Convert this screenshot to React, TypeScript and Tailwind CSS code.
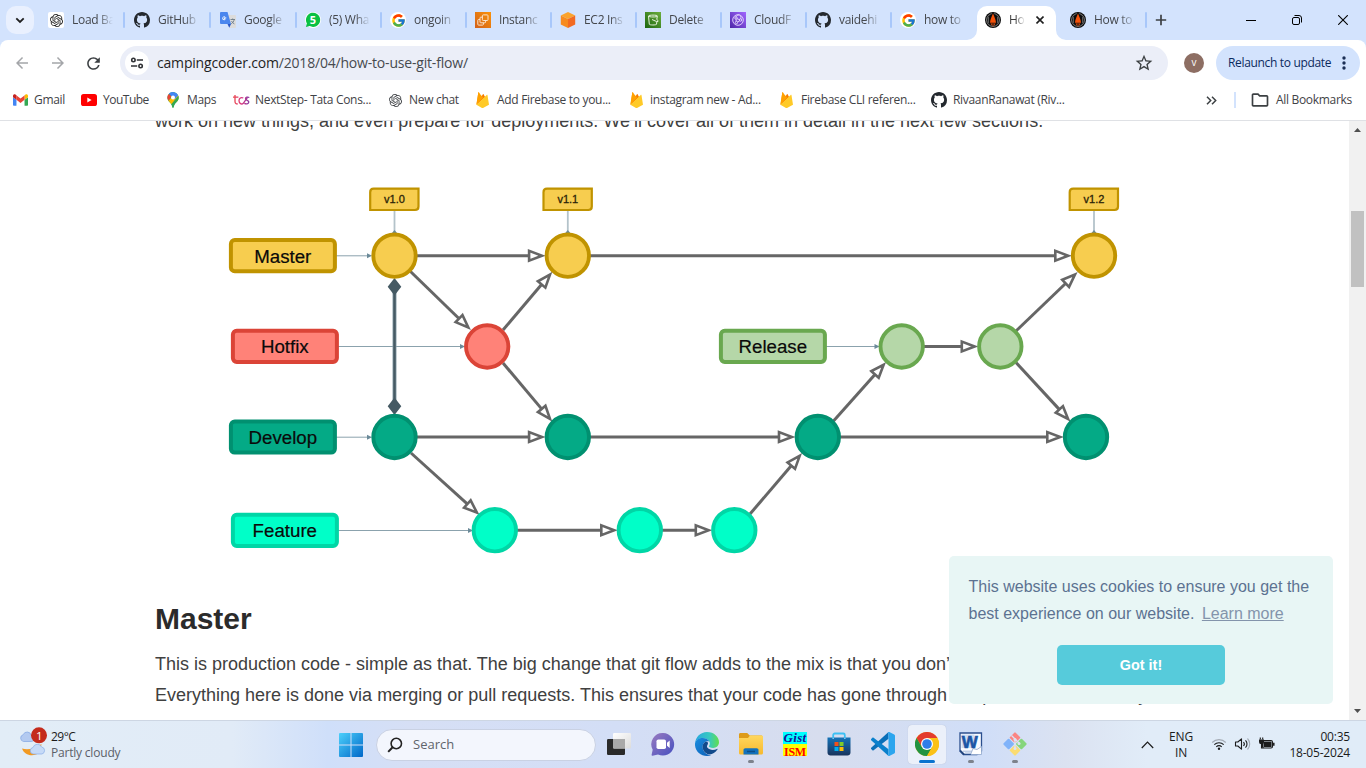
import React from "react";
import {
  MdArrowBack,
  MdArrowForward,
  MdRefresh,
  MdStarBorder,
  MdOutlineFolder,
} from "react-icons/md";
import { FcGoogle } from "react-icons/fc";
import { SiOpenai } from "react-icons/si";

/* ---------- favicons ---------- */

const OpenAiTile = () => (
  <span className="flex size-4 items-center justify-center rounded-[2px] bg-white text-[#222]">
    <SiOpenai size={13} />
  </span>
);

const GithubMark = () => (
  <svg width="16" height="16" viewBox="0 0 16 16" className="shrink-0">
    <path
      fill="#24292f"
      d="M8 0C3.58 0 0 3.58 0 8c0 3.54 2.29 6.53 5.47 7.59.4.07.55-.17.55-.38 0-.19-.01-.82-.01-1.49-2.01.37-2.53-.49-2.69-.94-.09-.23-.48-.94-.82-1.13-.28-.15-.68-.52-.01-.53.63-.01 1.08.58 1.23.82.72 1.21 1.87.87 2.33.66.07-.52.28-.87.51-1.07-1.78-.2-3.64-.89-3.64-3.95 0-.87.31-1.59.82-2.15-.08-.2-.36-1.02.08-2.12 0 0 .67-.21 2.2.82.64-.18 1.32-.27 2-.27s1.36.09 2 .27c1.53-1.04 2.2-.82 2.2-.82.44 1.1.16 1.92.08 2.12.51.56.82 1.27.82 2.15 0 3.07-1.87 3.75-3.65 3.95.29.25.54.73.54 1.48 0 1.07-.01 1.93-.01 2.2 0 .21.15.46.55.38A8.01 8.01 0 0 0 16 8c0-4.42-3.58-8-8-8z"
    />
  </svg>
);

const Translate = () => (
  <svg width="16" height="16" viewBox="0 0 16 16">
    <path d="M6 3h9.200c.5 0 .8.4.8.8v11.400c0 .4-.3.800-.8.800H9.500z" fill="#dcdcdc" />
    <path d="M1 0h6.500l3.500 12H1a1 1 0 0 1-1-1V1a1 1 0 0 1 1-1z" fill="#4a86ee" />
    <path d="M7.500 12H11l-1.700 3.800z" fill="#2a56c6" />
    <path d="M6.300 5.900H4.500v1h.8c-.2.700-.6.900-1.100.900a1.500 1.500 0 1 1 .9-2.700" fill="none" stroke="#fff" strokeWidth=".9" />
    <path d="M10.500 7.500h4.500M12.700 6.500v1M14.200 7.500c-.3 1.900-1.500 3.300-3 4.300M11.500 9c.5 1.300 1.500 2.200 2.900 2.900" stroke="#6b7b87" strokeWidth=".9" fill="none" />
  </svg>
);

const Whatsapp = () => (
  <span className="flex size-4 items-center justify-center rounded-full bg-white">
    <svg width="16" height="16" viewBox="0 0 16 16">
      <path d="M.9 15.100l1-3.700A7.100 7.100 0 1 1 4.700 14.100z" fill="#0ac143" />
      <text x="8" y="11.900" textAnchor="middle" fontFamily="Open Sans, sans-serif" fontWeight="700" fontSize="11" fill="#fff">5</text>
    </svg>
  </span>
);

const GoogleG = () => (
  <span className="flex size-4 items-center justify-center rounded-full bg-white">
    <FcGoogle size={15} />
  </span>
);

const Ec2Instances = () => (
  <svg width="16" height="16" viewBox="0 0 16 16">
    <defs>
      <linearGradient id="ec2" x1="0" y1="1" x2="1" y2="0">
        <stop offset="0" stopColor="#d1611b" />
        <stop offset="1" stopColor="#fb9208" />
      </linearGradient>
    </defs>
    <path d="M0 0h16v16H0z" fill="url(#ec2)" />
    <g stroke="#fbe3cb" strokeWidth="1">
      <rect x="2.800" y="7.500" width="5.600" height="5.600" rx=".8" fill="none" />
      <rect x="5" y="5.200" width="5.600" height="5.600" rx=".8" fill="#e27716" />
      <rect x="7.400" y="2.900" width="5.600" height="5.600" rx=".8" fill="#ea8211" />
    </g>
  </svg>
);

const OrangeCube = () => (
  <svg width="16" height="16" viewBox="0 0 16 16">
    <path d="M8 0l7.200 3.500L8 7 .8 3.500z" fill="#fba32c" />
    <path d="M.8 3.500L8 7v9L.8 12.500z" fill="#f78b1f" />
    <path d="M15.200 3.500L8 7v9l7.200-3.500z" fill="#f26a21" />
  </svg>
);

const S3Bucket = () => (
  <svg width="16" height="16" viewBox="0 0 16 16">
    <defs>
      <linearGradient id="s3" x1="0" y1="1" x2="1" y2="0">
        <stop offset="0" stopColor="#1b660f" />
        <stop offset="1" stopColor="#6cae3e" />
      </linearGradient>
    </defs>
    <path d="M0 0h16v16H0z" fill="url(#s3)" />
    <g fill="none" stroke="#e6f2df" strokeWidth="1">
      <path d="M3.500 4l.8 8.300c.1.900 7 .9 7.200 0l.3-2.500M3.500 4c0-1.200 9-1.200 9 0 0 1.300-9 1.300-9 0z" />
      <path d="M7 7.500l4.500 2h1.500c0-1-.5-1.700-1.200-2.300L12.400 4.200" />
    </g>
  </svg>
);

const CloudFront = () => (
  <svg width="16" height="16" viewBox="0 0 16 16">
    <defs>
      <linearGradient id="cf" x1="0" y1="1" x2="1" y2="0">
        <stop offset="0" stopColor="#4d27a8" />
        <stop offset="1" stopColor="#a166ff" />
      </linearGradient>
    </defs>
    <path d="M0 0h16v16H0z" fill="url(#cf)" />
    <g fill="none" stroke="#e9ddff" strokeWidth=".9">
      <circle cx="8" cy="8" r="5.300" />
      <circle cx="6" cy="6" r="1.200" />
      <circle cx="10.500" cy="8" r="1.200" />
      <circle cx="6.500" cy="10.500" r="1.200" />
      <path d="M6 4.800c1-2 2.500-2 3.500-1.800M7 6.700l2.400.9M6 7.200l.3 2.100M7.500 10l2.200-1.200M10.800 6.800c.4-1 .2-2-.3-3" />
    </g>
  </svg>
);

const Camp = () => (
  <svg width="16" height="16" viewBox="0 0 16 16" className="shrink-0">
    <circle cx="8" cy="8" r="8" fill="#0d0d0d" />
    <circle cx="8" cy="8" r="6.400" fill="none" stroke="#9a9a9a" strokeWidth=".8" />
    <path d="M8 0l4 6v6H4V6z" fill="#0d0d0d" />
    <path d="M8 1.500c.7 2 3 6 3 9.300H5c0-3.300 2.300-7.300 3-9.300z" fill="#f4520b" />
    <path d="M5.500 11.500h1.500v2zM10.500 11.500H9v2zM7.600 10.800h.8v3.700h-.8z" fill="#f4520b" />
    <path d="M3.400 5v6M12.600 5v6" stroke="#777" strokeWidth=".8" />
  </svg>
);

/* ---------- bookmark icons ---------- */

const GmailIcon = () => (
  <svg width="15" height="12" viewBox="0 0 52 40" className="shrink-0">
    <path d="M3.500 40H12V19.400L0 10.300v26.200C0 38.400 1.600 40 3.500 40" fill="#4285f4" />
    <path d="M40 40h8.500c2 0 3.500-1.600 3.500-3.500V10.300l-12 9.100" fill="#34a853" />
    <path d="M40 4v15.400l12-9.100V5.500c0-4.400-5-6.900-8.600-4.300" fill="#fbbc04" />
    <path d="M12 19.400V4l14 10.500L40 4v15.400L26 30" fill="#ea4335" />
    <path d="M0 5.500v4.800l12 9.100V4L8.600 1.200C5-1.400 0 1.100 0 5.500" fill="#c5221f" />
  </svg>
);

const YoutubeIcon = () => (
  <svg width="16" height="12" viewBox="0 0 16 12" className="shrink-0">
    <rect width="16" height="12" rx="2.600" fill="#f00" />
    <path d="M6.300 3.500v5l4.300-2.500z" fill="#fff" />
  </svg>
);

const MapsIcon = () => (
  <svg width="12" height="16" viewBox="0 0 12 16" className="shrink-0">
    <path d="M6 16c-.6 0-.7-2-1.700-3.700C3.200 10.500.4 9 .4 5.600A5.600 5.600 0 0 1 6 0a5.600 5.600 0 0 1 5.600 5.600c0 3.400-2.800 4.900-3.900 6.700C6.700 14 6.600 16 6 16z" fill="#34a853" />
    <path d="M1.900 1.900L4.500 4.200 1.600 8.800C.9 7.900.4 6.900.4 5.600.4 4.100 1 2.800 1.900 1.900z" fill="#ea4335" />
    <path d="M1.500 8.700l6.200-6.900 3.300 1.500c.9 2.200.6 4.200-.5 5.600l-4.600 3.600-1.700-.5z" fill="#fbbc04" />
    <path d="M11.300 3.800c.7 2.100.2 3.900-.8 5.200-1 1.200-2.200 2.100-2.800 3.300C6.700 14 6.600 16 6 16s-.7-2-1.700-3.700z" fill="#34a853" />
    <path d="M1.900 1.800A5.600 5.600 0 0 1 11.100 3.500L7.400 7.500 4.500 4.200z" fill="#4285f4" />
    <circle cx="6" cy="5.600" r="2" fill="#fff" />
  </svg>
);

const TcsIcon = () => (
  <svg width="17" height="12" viewBox="0 0 17 12" className="shrink-0">
    <defs>
      <linearGradient id="tcs" x1="0" y1="0" x2="17" y2="0" gradientUnits="userSpaceOnUse">
        <stop offset="0" stopColor="#ec4a4a" />
        <stop offset=".5" stopColor="#d8327c" />
        <stop offset="1" stopColor="#7a3aa8" />
      </linearGradient>
    </defs>
    <g fill="none" stroke="url(#tcs)" strokeWidth="1.300">
      <path d="M2 1v6.500c0 2 1.300 2.700 2.800 2.400M0 3.200h5.400" />
      <path d="M10.300 4C8 2.900 6 4.200 6 6.800s2.600 4.100 4.300 2.500l4.200-6" />
      <path d="M16.300 3.500c-1.600-.7-3.800-.4-3.800 1.100 0 2 3.300 1.500 3.300 3.500 0 2-2.800 2.100-4.500 1.300" />
    </g>
  </svg>
);

const FirebaseIcon = () => (
  <svg width="13" height="16" viewBox="0 0 13 16" className="shrink-0">
    <path d="M.4 12.800L2.300.5c.1-.5.600-.5.800-.1l2 3.800z" fill="#ffa000" />
    <path d="M.4 12.800L6.900 2.200c.2-.4.500-.4.700 0l1.600 3z" fill="#f57c00" />
    <path d="M.4 12.800L10.700 2.900c.3-.3.700-.1.800.3l1.500 9.500-6 3.200c-.4.200-.6.200-1 0z" fill="#ffca28" />
    <path d="M2.300.5l5 5.100L.4 12.800z" fill="#ffa000" />
  </svg>
);

/* ---------- data ---------- */

type Tab = { icon: React.ReactNode; label: string; sep?: boolean; width?: string };

const tabs: Tab[] = [
  { icon: <OpenAiTile />, label: "Load Ba", sep: true, width: "w-[86px]" },
  { icon: <GithubMark />, label: "GitHub", sep: true, width: "w-[86px]" },
  { icon: <Translate />, label: "Google", sep: true },
  { icon: <Whatsapp />, label: "(5) Wha", sep: true },
  { icon: <GoogleG />, label: "ongoin", sep: true },
  { icon: <Ec2Instances />, label: "Instanc", sep: true },
  { icon: <OrangeCube />, label: "EC2 Ins", sep: true },
  { icon: <S3Bucket />, label: "Delete", sep: true },
  { icon: <CloudFront />, label: "CloudF", sep: true },
  { icon: <GithubMark />, label: "vaidehi", sep: true },
  { icon: <GoogleG />, label: "how to" },
];

function TabCell({ icon, label, sep, width = "w-[85px]" }: Tab) {
  return (
    <div className={`flex h-full shrink-0 items-center pl-2 ${width}`}>
      <span className="flex size-4 shrink-0 items-center">{icon}</span>
      <span className="ml-2 w-[42px] text-xs tracking-[-0.3px] whitespace-nowrap text-[#44474c] [mask-image:linear-gradient(to_right,#000_62%,transparent_98%)]">
        {label}
      </span>
      {sep && <span className="ml-[9px] h-4 w-[2px] shrink-0 rounded bg-[#a8c7fa]" />}
    </div>
  );
}

function TabStrip() {
  return (
    <div className="flex h-10 items-center bg-[#d3e3fd] pl-1.5">
      <div className="flex size-7 items-center justify-center rounded-[10px] bg-[#e9f0fe]">
        <svg width="10" height="7" viewBox="0 0 10 7" fill="none" stroke="#1f1f1f" strokeWidth="1.800">
          <path d="M1.300 1.300L5 5l3.700-3.700" />
        </svg>
      </div>
      <div className="flex h-full pl-1.5">
        {tabs.map((t, i) => (
          <TabCell key={i} {...t} />
        ))}
        <div className="relative mt-1.5 flex h-[34px] w-[79px] items-center rounded-t-[10px] bg-white pb-1.5 pl-2">
          <svg className="absolute bottom-0 -left-2.5" width="10" height="10">
            <path d="M10 0v10H0A10 10 0 0 0 10 0" fill="#fff" />
          </svg>
          <svg className="absolute -right-2.5 bottom-0" width="10" height="10">
            <path d="M0 0v10h10A10 10 0 0 1 0 0" fill="#fff" />
          </svg>
          <Camp />
          <span className="ml-2 w-4 text-xs tracking-[-0.3px] whitespace-nowrap text-[#3c3c3c] [mask-image:linear-gradient(to_right,#000_40%,transparent)]">
            Ho
          </span>
          <svg className="ml-[11px]" width="8" height="8" viewBox="0 0 8 8" stroke="#1f1f1f" strokeWidth="1.600">
            <path d="M.5.5l7 7M7.500.5l-7 7" />
          </svg>
        </div>
        <div className="w-[6px]" />
        <TabCell icon={<Camp />} label="How to" sep />
      </div>
      <svg className="ml-2" width="12" height="12" viewBox="0 0 12 12" stroke="#3c4043" strokeWidth="1.700">
        <path d="M6 .8v10.400M.8 6h10.400" />
      </svg>
      <div className="ml-auto flex items-center gap-9 pr-[18px] text-black">
        <svg width="10" height="10" stroke="#000">
          <path d="M0 5.500h10" />
        </svg>
        <svg width="10" height="10" viewBox="0 0 10 10" fill="none" stroke="#000">
          <rect x=".5" y="2.500" width="7" height="7" rx="1.500" />
          <path d="M2.500.5H7A2.500 2.500 0 0 1 9.500 3v4.500" />
        </svg>
        <svg width="10" height="10" viewBox="0 0 10 10" stroke="#000" strokeWidth="1.100">
          <path d="M.2.2l9.600 9.600M9.800.2L.2 9.800" />
        </svg>
      </div>
    </div>
  );
}

function Toolbar() {
  return (
    <div className="bg-[#d3e3fd]">
      <div className="flex h-[46px] items-center rounded-t-lg bg-white pl-[13px]">
        <MdArrowBack size={18} className="text-[#a4a6a9]" />
        <MdArrowForward size={18} className="ml-[18px] text-[#a4a6a9]" />
        <MdRefresh size={19} className="ml-[17px] text-[#3c4043]" />
        <div className="ml-[17px] flex h-[34px] w-[1048px] items-center rounded-full bg-[#ebeef8] pr-[14px] pl-[5px]">
          <span className="flex size-6 items-center justify-center rounded-full bg-white">
            <svg width="14" height="12" viewBox="0 0 14 12" fill="none" stroke="#303236" strokeWidth="1.600">
              <circle cx="3.400" cy="3" r="1.700" />
              <path d="M6.800 3H13M1 9h6.200" />
              <circle cx="10.600" cy="9" r="1.700" />
            </svg>
          </span>
          <span className="ml-2 text-sm tracking-[-0.19px] text-[#474a4f]">
            <span className="text-[#1f1f1f]">campingcoder.com</span>/2018/04/how-to-use-git-flow/
          </span>
          <MdStarBorder size={20} className="ml-auto text-[#3c4043]" />
        </div>
        <div className="ml-4 flex size-5 items-center justify-center rounded-full bg-[#8d6e63] pb-px text-[10px] font-medium text-white">
          v
        </div>
        <div className="ml-3 flex h-[34px] w-36 items-center rounded-full bg-[#d3e3fd] pl-3 text-[#0b2a5e]">
          <span className="text-xs tracking-[-0.33px] whitespace-nowrap">Relaunch to update</span>
          <svg className="ml-auto mr-[14px]" width="4" height="14" fill="#1c2f55">
            <circle cx="2" cy="2" r="1.700" />
            <circle cx="2" cy="7" r="1.700" />
            <circle cx="2" cy="12" r="1.700" />
          </svg>
        </div>
      </div>
    </div>
  );
}

function Bookmark({ icon, label, box, width }: { icon: React.ReactNode; label: string; box: string; width: string }) {
  return (
    <div className={`flex shrink-0 items-center ${box}`}>
      {icon}
      <span className={`ml-auto whitespace-nowrap ${width}`}>{label}</span>
    </div>
  );
}

function BookmarksBar() {
  return (
    <div className="flex h-[34px] items-center bg-white pb-1.5 pl-[13px] text-xs tracking-[-0.31px] text-[#3f4246]">
      <Bookmark icon={<GmailIcon />} label="Gmail" box="w-[68px] tracking-[-0.3px]" width="w-[47px]" />
      <Bookmark icon={<YoutubeIcon />} label="YouTube" box="w-[86px] tracking-[-0.5px]" width="w-[64px]" />
      <Bookmark icon={<MapsIcon />} label="Maps" box="w-[66px]" width="w-[46px]" />
      <Bookmark icon={<TcsIcon />} label="NextStep- Tata Cons..." box="w-[156px]" width="w-[134px]" />
      <Bookmark icon={<SiOpenai size={13} />} label="New chat" box="w-[87px]" width="w-[67px]" />
      <Bookmark icon={<FirebaseIcon />} label="Add Firebase to you..." box="w-[154px]" width="w-[133px]" />
      <Bookmark icon={<FirebaseIcon />} label="instagram new - Ad..." box="w-[150px]" width="w-[130px]" />
      <Bookmark icon={<FirebaseIcon />} label="Firebase CLI referen..." box="w-[151px]" width="w-[130px]" />
      <Bookmark icon={<GithubMark />} label="RivaanRanawat (Riv..." box="w-[135px]" width="w-[113px]" />
      <svg className="ml-auto" width="11" height="9" viewBox="0 0 11 9" fill="none" stroke="#3c4043" strokeWidth="1.500">
        <path d="M1 .8l3.700 3.700L1 8.200M6 .8l3.700 3.700L6 8.200" />
      </svg>
      <span className="ml-[17px] h-4 w-[2px] bg-[#d3e3fd]" />
      <MdOutlineFolder size={20} className="ml-[14px] text-[#3c4043]" />
      <span className="ml-1.5 w-[76px] whitespace-nowrap">All Bookmarks</span>
      <span className="w-[14px]" />
    </div>
  );
}

/* ---------- git flow diagram ---------- */

function Arrow({ p }: { p: [number, number, number, number] }) {
  const [x1, y1, x2, y2] = p;
  const len = Math.hypot(x2 - x1, y2 - y1) + 1;
  const angle = (Math.atan2(y2 - y1, x2 - x1) * 180) / Math.PI;
  return (
    <g transform={`translate(${x1} ${y1}) rotate(${angle})`} stroke="#666" fill="#fff">
      <path d={`M0 0H${len - 16.500}`} strokeWidth="3" />
      <path d={`M${len - 16.700} -4.900V4.900L${len - 3.800} 0z`} strokeWidth="2.600" />
    </g>
  );
}

const palette = {
  gold: ["#f7cd4f", "#c09300"],
  red: ["#ff8278", "#db4437"],
  teal: ["#04aa86", "#019070"],
  mint: ["#00ffc8", "#00d6a6"],
  green: ["#b5d7a8", "#69a84f"],
} as const;
type Hue = keyof typeof palette;

const nodes: [number, number, Hue][] = [
  [394.500, 255.700, "gold"],
  [567.800, 255.700, "gold"],
  [1094, 255.700, "gold"],
  [487.200, 346.500, "red"],
  [901.700, 346.500, "green"],
  [1000.300, 346.500, "green"],
  [394.500, 437, "teal"],
  [567.800, 437, "teal"],
  [817.800, 437, "teal"],
  [1086, 437, "teal"],
  [494.800, 530.200, "mint"],
  [639.800, 530.200, "mint"],
  [734.300, 530.200, "mint"],
];

const branches: [string, number, number, Hue, number][] = [
  ["Master", 229, 238.300, "gold", 372],
  ["Hotfix", 231, 329, "red", 465],
  ["Release", 719, 329, "green", 879.500],
  ["Develop", 229, 419.700, "teal", 372],
  ["Feature", 231, 513, "mint", 473],
];

const arrows: [number, number, number, number][] = [
  [417, 255.700, 544.800, 255.700],
  [590, 255.700, 1071, 255.700],
  [410.500, 271.500, 470.300, 329.500],
  [503, 330, 551.800, 272.500],
  [503, 363, 551.800, 421],
  [417, 437, 544.800, 437],
  [590, 437, 794.700, 437],
  [840, 437, 1063, 437],
  [411, 453, 479, 514.500],
  [517, 530.200, 617, 530.200],
  [662, 530.200, 711.500, 530.200],
  [750, 514, 801.500, 453.700],
  [833.500, 421, 885.500, 362.700],
  [924, 346.500, 977.500, 346.500],
  [1016, 331, 1077, 272.500],
  [1016, 362.500, 1070, 421],
];

function GitFlowDiagram() {
  return (
    <svg width="1195" height="420" viewBox="154 150 1195 420" className="-ml-px block" fontFamily="Liberation Sans, Arial, sans-serif">
      {branches.map(([name, x, y, hue, end]) => (
        <g key={name}>
          <path d={`M${x + 107} ${y + 17.500}H${end - 4}`} stroke="#8ba2ad" strokeWidth="1" />
          <path d={`M${end - 5} ${y + 15}v5l5 -2.500z`} fill="#6b8a99" />
          <rect x={x + 1.900} y={y + 1.800} width="104" height="31.100" rx="3.800" fill={palette[hue][0]} stroke={palette[hue][1]} strokeWidth="4" />
          <text x={x + 53.800} y={y + 24.300} fontSize="18.700" textAnchor="middle" fill="#0a0a0a" stroke="#0a0a0a" strokeWidth=".2">
            {name}
          </text>
        </g>
      ))}
      {[394.500, 567.800, 1094].map((x, i) => (
        <g key={x}>
          <path d={`M${x} 211v22`} stroke="#b4c3ca" strokeWidth="1.800" />
          <path d={`M${x - 3} 233.500l3 -3.500l3 3.500z`} fill="#6b8a99" />
          <path
            d={`M${x - 20.500} 188.700H${x + 24} V206.500Q${x + 24} 210 ${x + 20.500} 210H${x - 24.300} V192.200Q${x - 24.300} 188.700 ${x - 20.800} 188.700Z`}
            fill="#f7cd4f"
            stroke="#c09300"
            strokeWidth="2.200"
          />
          <text x={x} y="203" fontSize="11" textAnchor="middle" fill="#2b2408" stroke="#2b2408" strokeWidth=".3">
            v1.{i}
          </text>
        </g>
      ))}
      <path d="M394.500 285V410" stroke="#8aa0aa" strokeWidth="4" />
      <path d="M394.500 285V410" stroke="#455a64" strokeWidth="2.400" />
      <path d="M394.500 278l6.800 8.800-6.800 8.800-6.800-8.800zM394.500 397.500l6.800 8.800-6.800 8.800-6.800-8.800z" fill="#455a64" />
      {arrows.map((p, i) => (
        <Arrow key={i} p={p} />
      ))}
      {nodes.map(([x, y, hue], i) => (
        <circle key={i} cx={x} cy={y} r="21.200" fill={palette[hue][0]} stroke={palette[hue][1]} strokeWidth="3.900" />
      ))}
    </svg>
  );
}

function CookieNotice() {
  return (
    <div className="absolute top-[435px] left-[949px] flex h-[148px] w-96 flex-col rounded-[5px] bg-[#e8f6f5] pt-[17px] pl-[19.500px] text-base leading-[27px] text-[#5c7291]">
      <p className="whitespace-nowrap">
        This website uses cookies to ensure you get the
        <br />
        best experience on our website.{" "}
        <span className="ml-[3px] text-[#8394ab] underline">Learn more</span>
      </p>
      <button className="mt-[18px] ml-[88.500px] h-10 w-[168px] rounded-[5px] bg-[#56cbdb] text-[14.400px] font-bold text-white">
        Got it!
      </button>
    </div>
  );
}

function Page() {
  return (
    <div className="relative flex h-[599px] overflow-hidden bg-white font-['Liberation_Sans',Arial,sans-serif]">
      <main className="flex w-[1349px] flex-col pl-[155px] text-[18px] leading-[31px] whitespace-nowrap text-[#404040]">
        <p className="-mt-[15px] h-[44px]">
          work on new things, and even prepare for deployments. We’ll cover all of them in detail in the next few sections.
        </p>
        <GitFlowDiagram />
        <h2 className="mt-[31px] text-[30px] leading-9 font-bold text-[#2b2b2b]">Master</h2>
        <p className="mt-[12px]">
          This is production code - simple as that. The big change that git flow adds to the mix is that you don’t
          <br />
          Everything here is done via merging or pull requests. This ensures that your code has gone through the peer review carefully
        </p>
      </main>
      <div className="flex w-[17px] flex-col items-center bg-[#f1f1f1]">
        <svg width="17" height="17">
          <path d="M5 11L8.500 7L12 11z" fill="#505050" />
        </svg>
        <div className="mt-[73px] h-[76px] w-[13px] bg-[#c1c1c1]" />
        <svg className="mt-auto" width="17" height="17">
          <path d="M5 6L8.500 10L12 6z" fill="#505050" />
        </svg>
      </div>
      <CookieNotice />
    </div>
  );
}

/* ---------- taskbar ---------- */

const WindowsLogo = () => (
  <svg width="24" height="24" viewBox="0 0 24 24">
    <defs>
      <linearGradient id="win" x1="0" y1="0" x2="1" y2="1">
        <stop offset="0" stopColor="#4cd0fb" />
        <stop offset="1" stopColor="#0067c8" />
      </linearGradient>
    </defs>
    <path d="M0 1a1 1 0 0 1 1-1h10.500v11.500H0zM12.500 0H23a1 1 0 0 1 1 1v10.500H12.500zM0 12.500h11.500V24H1a1 1 0 0 1-1-1zM12.500 12.500H24V23a1 1 0 0 1-1 1H12.500z" fill="url(#win)" />
  </svg>
);

const TaskView = () => (
  <svg width="24" height="24" viewBox="0 0 24 24">
    <defs>
      <linearGradient id="tv" x1="0" y1="0" x2="1" y2="1">
        <stop offset="0" stopColor="#fff" />
        <stop offset="1" stopColor="#dcdcdc" />
      </linearGradient>
    </defs>
    <rect x="0" y="7" width="18" height="16" rx="1.200" fill="#2a2a2a" />
    <rect x="6" y="1" width="18" height="15.500" rx="1.200" fill="url(#tv)" />
    <path d="M6 7h12v9.500H7a1 1 0 0 1-1-1z" fill="#a9a9a9" />
  </svg>
);

const Teams = () => (
  <svg width="24" height="24" viewBox="0 0 24 24">
    <defs>
      <linearGradient id="tm" x1="0" y1="0" x2="1" y2="1">
        <stop offset="0" stopColor="#9a7bc0" />
        <stop offset="1" stopColor="#4650c0" />
      </linearGradient>
    </defs>
    <path d="M12.200 1A11.300 11.300 0 1 1 7 22.500L1.500 23.700c-.7.100-1-.4-.9-1l1.100-5A11.300 11.300 0 0 1 12.200 1z" fill="url(#tm)" />
    <rect x="5.500" y="7.500" width="9.500" height="9.500" rx="1.800" fill="#fff" />
    <path d="M16 10.800l2.700-2.300v7.500L16 13.800z" fill="#fff" />
  </svg>
);

const Edge = () => (
  <svg width="24" height="24" viewBox="0 0 24 24">
    <defs>
      <linearGradient id="eg1" x1="0" y1=".3" x2="1" y2=".3">
        <stop offset="0" stopColor="#2aa7e0" />
        <stop offset=".6" stopColor="#36c9c0" />
        <stop offset="1" stopColor="#62df4b" />
      </linearGradient>
      <linearGradient id="eg2" x1="0" y1="0" x2="1" y2="1">
        <stop offset="0" stopColor="#1b8ee0" />
        <stop offset="1" stopColor="#0c5db5" />
      </linearGradient>
    </defs>
    <path d="M0 11.500C.5 5 5.500 0 12 0c7.200 0 12 5 12 10.300 0 3.500-2.800 5.700-5.800 5.700-3 0-4.400-1.100-4.400-1.700 0-.5 1-1 1-2.900C14.800 8.500 11.500 6 7.700 6 3.500 6 .8 8.700 0 11.500z" fill="url(#eg1)" />
    <path d="M0 11.500C.8 8 3.700 6 7.700 6c3.200 0 5.600 1.500 6.600 3.400-3.500-.7-7.200 1.700-6.600 6.600.5 4 4 7 8.500 7.200C8 26-.6 20 0 11.500z" fill="url(#eg2)" />
    <path d="M9.800 10.300c-3 2-3 7.200.3 10.200 3.500 3.200 8.800 2.500 12.500-3.200.2-.4-.1-.6-.5-.4-3.600 1.800-7.800 1-9.300-.800-1.800-2.200-.1-3 .2-4.700.2-1.300-1.500-2.100-3.200-1.100z" fill="#114a8b" />
  </svg>
);

const Explorer = () => (
  <svg width="24" height="24" viewBox="0 0 24 24">
    <defs>
      <linearGradient id="fe" x1="0" y1="0" x2="0" y2="1">
        <stop offset="0" stopColor="#ffd75e" />
        <stop offset="1" stopColor="#f7b92e" />
      </linearGradient>
    </defs>
    <path d="M0 2.500C0 1.700.6 1 1.400 1h6.800l2.500 2.500H22c1 0 1.600.7 1.600 1.500V9H0z" fill="#dd9b1a" />
    <path d="M0 6h9l2-2.500h11.500c.9 0 1.500.6 1.500 1.500v16c0 .9-.6 1.500-1.500 1.500h-21C.6 22.500 0 21.900 0 21z" fill="url(#fe)" />
    <path d="M4.500 22.500v-4.500c0-1 .8-1.800 1.800-1.800h11.400c1 0 1.800.8 1.800 1.800v4.500z" fill="#1272bd" />
    <path d="M8 19.500h8" stroke="#0c4f87" strokeWidth="1.500" />
  </svg>
);

const GistIsm = () => (
  <span className="flex size-6 flex-col items-center overflow-hidden font-['Liberation_Serif',serif] text-[13px] leading-3 font-bold tracking-[0.3px]">
    <span className="h-3 w-6 bg-[#00ffff] text-center text-[#12129a] italic">Gist</span>
    <span className="h-3 w-6 bg-[#ffff00] text-center text-xs tracking-[-0.3px] text-[#ff0000]">ISM</span>
  </span>
);

const Store = () => (
  <svg width="24" height="24" viewBox="0 0 24 24">
    <defs>
      <linearGradient id="st" x1="0" y1="0" x2="0" y2="1">
        <stop offset="0" stopColor="#1473b8" />
        <stop offset="1" stopColor="#19335c" />
      </linearGradient>
    </defs>
    <path d="M6.200 6.500V3C6.200 2 7 1.500 7.800 1.500h8.400c1 0 1.600.7 1.600 1.500v3.500" fill="none" stroke="#3cc0f4" strokeWidth="1.800" />
    <path d="M.5 5.500h5v1.500h1.400V5.500h10.200v1.500h1.400V5.500h5v15c0 1.700-1.300 3-3 3h-17c-1.700 0-3-1.300-3-3z" fill="url(#st)" />
    <path d="M7.500 10h4v4h-4z" fill="#f1511b" />
    <path d="M12.500 10h4v4h-4z" fill="#80cc28" />
    <path d="M7.500 15h4v4h-4z" fill="#00adef" />
    <path d="M12.500 15h4v4h-4z" fill="#fbbc09" />
  </svg>
);

const VsCode = () => (
  <svg width="24" height="24" viewBox="0 0 24 24">
    <path d="M17.500 0v6.800L2.600 18.200c-.4.300-.8.300-1.200 0L.2 17.100c-.4-.4-.4-1 0-1.400z" fill="#0a6fb8" />
    <path d="M.2 8.300c-.4-.4-.4-1 0-1.400l1.200-1.100c.4-.3.800-.3 1.200 0L17.500 17.200V24z" fill="#0a80cc" />
    <path d="M17 .4c.3-.4.8-.5 1.300-.3l4.900 2.300c.5.300.8.700.8 1.300v16.600c0 .6-.3 1-.8 1.300l-4.900 2.300c-.5.200-1 .1-1.300-.3l.5-.8V1.200z" fill="#2ba5ee" />
  </svg>
);

const Chrome = () => (
  <svg width="24" height="24" viewBox="0 0 24 24">
    <circle cx="12" cy="12" r="12" fill="#fbc116" />
    <path d="M12 6h10.400A12 12 0 0 0 1.600 6l5.200 9z" fill="#e33b2e" />
    <path d="M1.600 6A12 12 0 0 0 12 24l5.200-9H6.800z" fill="#229342" />
    <path d="M22.400 6H12l5.200 9L12 24A12 12 0 0 0 22.400 6z" fill="#fbc116" />
    <circle cx="12" cy="12" r="6" fill="#fff" />
    <circle cx="12" cy="12" r="4.800" fill="#2f7de8" />
  </svg>
);

const Word = () => (
  <svg width="24" height="24" viewBox="0 0 24 24">
    <path d="M1 1h21.500v18L18 22.500H4.500L1 19z" fill="#f8faff" stroke="#2b4f8e" strokeWidth="1.300" />
    <path d="M2.500 2.500h13V16h-13z" fill="#cfdcf2" />
    <path d="M4 19.200h9M6 21h6" stroke="#9fb4d8" strokeWidth=".9" />
    <path d="M12 21.500l2-5 4 1 4.500-3v8H12z" fill="#fff" stroke="#8ea6cc" strokeWidth=".8" />
    <text x="10.800" y="15.800" textAnchor="middle" fontSize="17" fontWeight="700" fontFamily="Liberation Sans, sans-serif" fill="#1b55a5" stroke="#1b55a5" strokeWidth=".6">W</text>
    <path d="M1 18.500l4 4" stroke="#24467f" strokeWidth="1.800" />
  </svg>
);

const GitBash = () => (
  <svg width="24" height="24" viewBox="0 0 24 24">
    <g transform="rotate(45 12 12)">
      <rect x="3.500" y="3.500" width="8" height="8" rx="1" fill="#fb8583" />
      <rect x="12.500" y="3.500" width="8" height="8" rx="1" fill="#86d67c" />
      <rect x="3.500" y="12.500" width="8" height="8" rx="1" fill="#80b3fa" />
      <rect x="12.500" y="12.500" width="8" height="8" rx="1" fill="#fbdc72" />
    </g>
    <path d="M8.500 3.500l3.500 3.500 4 4M12 7v10" stroke="#dbe3f5" strokeWidth="1.400" fill="none" />
    <circle cx="12" cy="7.500" r="1.500" fill="#dbe3f5" />
    <circle cx="16" cy="11.500" r="1.500" fill="#dbe3f5" />
    <circle cx="12" cy="16.500" r="1.500" fill="#dbe3f5" />
  </svg>
);

const apps: { icon: React.ReactNode; state?: "open" | "active" }[] = [
  { icon: <TaskView /> },
  { icon: <Teams /> },
  { icon: <Edge /> },
  { icon: <Explorer />, state: "open" },
  { icon: <GistIsm /> },
  { icon: <Store /> },
  { icon: <VsCode /> },
  { icon: <Chrome />, state: "active" },
  { icon: <Word />, state: "open" },
  { icon: <GitBash />, state: "open" },
];

function Weather() {
  return (
    <div className="flex items-center pl-5">
      <svg width="28" height="30" viewBox="0 0 28 30" className="overflow-visible">
        <path d="M2 18.500C4.500 25.500 13 27.500 20 22.500L21.500 14C15 18.500 8 20.500 2 18.500z" fill="#f29a22" />
        <path d="M3.500 11.500a3.500 3.500 0 0 1-.3-6.800 4.200 4.200 0 0 1 8 .500 3.200 3.200 0 0 1 .5 6.300z" fill="#b3caf0" stroke="#7fa5e3" strokeWidth=".7" />
        <path d="M13 24a3.300 3.300 0 0 1 0-6.500 4.600 4.600 0 0 1 8.600-.5 3.600 3.600 0 0 1 .4 7z" fill="#c6daf7" stroke="#8aaee6" strokeWidth=".7" />
        <circle cx="19" cy="5.300" r="8" fill="#c42b1c" />
        <text x="19.200" y="9.500" textAnchor="middle" fontSize="11.500" fill="#fff">1</text>
      </svg>
      <div className="ml-[3px] text-xs leading-4 tracking-[-0.2px]">
        <div className="tracking-[-0.5px] text-[#1b1b1b]">29°C</div>
        <div className="text-[#5b6068]">Partly cloudy</div>
      </div>
    </div>
  );
}

function Taskbar() {
  return (
    <div className="flex h-12 items-center border-t border-[#cdd6e3] bg-[linear-gradient(90deg,#e2edf7_0%,#e1ebf7_17%,#cfdffa_24%,#d6dff5_30%,#d3def6_45%,#d7ddee_60%,#d0def8_72%,#dbe2f1_78%,#e1ecf8_84%,#e0ecf8_100%)]">
      <div className="w-[339px]">
        <Weather />
      </div>
      <WindowsLogo />
      <div className="ml-[13px] flex h-8 w-[220px] items-center rounded-full border border-[#c9d1e3] bg-[#f3f6fd] pl-2.5">
        <svg width="16" height="16" viewBox="0 0 16 16" fill="none" stroke="#222" strokeWidth="1.600">
          <circle cx="9.300" cy="6.500" r="5.200" />
          <path d="M5.600 10.300L1.200 14.900" strokeWidth="2" />
        </svg>
        <span className="ml-2.5 text-[13px] text-[#60646b]">Search</span>
      </div>
      <div className="ml-1 flex gap-1.5">
        {apps.map((a, i) => (
          <div
            key={i}
            className={
              a.state === "active"
                ? "flex h-[39px] w-[38px] flex-col items-center rounded bg-[#ebf0fa] pt-[7px] shadow-[0_0_1px_#aab4c8]"
                : "flex h-[39px] w-[38px] flex-col items-center pt-[7px]"
            }
          >
            {a.icon}
            {a.state === "active" && <span className="mt-1 h-[3px] w-4 rounded-full bg-[#0a73cf]" />}
            {a.state === "open" && <span className="mt-1 h-[3px] w-1.5 rounded-full bg-[#7d828c]" />}
          </div>
        ))}
      </div>
      <div className="ml-auto flex items-center pr-4 text-xs leading-4 tracking-[-0.2px] text-[#1b1b1b]">
        <svg width="13" height="8" viewBox="0 0 13 8" fill="none" stroke="#1b1b1b" strokeWidth="1.200">
          <path d="M.8 7L6.500 1.200 12.200 7" />
        </svg>
        <div className="ml-[15px] w-6 text-center">
          ENG
          <br />
          IN
        </div>
        <svg className="ml-[18px]" width="16" height="16" viewBox="0 0 16 16" fill="none" stroke="#1b1b1b" strokeWidth="1.100">
          <path d="M1.200 5.500a9.500 9.500 0 0 1 13.600 0" stroke="#a4abb5" />
          <path d="M3.300 7.700a6.600 6.600 0 0 1 9.400 0M5.300 9.800a3.800 3.800 0 0 1 5.400 0" />
          <circle cx="8" cy="11.800" r="1.200" fill="#1b1b1b" stroke="none" />
        </svg>
        <svg className="ml-[7px]" width="17" height="16" viewBox="0 0 17 16" fill="none" stroke="#1b1b1b" strokeWidth="1.100">
          <path d="M1.500 5h2.300L7.500 1.800v10.400L3.800 9H1.500z" strokeLinejoin="round" />
          <path d="M9.500 5a3 3 0 0 1 0 4M11.500 3.300a5.300 5.300 0 0 1 0 7.400" />
          <path d="M13.500 1.500a8 8 0 0 1 0 11" stroke="#a4abb5" />
        </svg>
        <svg className="ml-[7px]" width="17" height="16" viewBox="0 0 17 16" fill="none" stroke="#1b1b1b" strokeWidth="1.100">
          <rect x="4.500" y="3.500" width="10" height="7.500" rx="1.500" />
          <path d="M6 5h7v4.500H6z" fill="#1b1b1b" />
          <path d="M15.800 5.800v3" strokeWidth="1.500" />
          <path d="M1 2.500h5v2.200a2.500 2.500 0 0 1-5 0z" fill="#1b1b1b" stroke="none" />
          <path d="M2.300.5v2M4.700.5v2M3.500 7v4h2" />
        </svg>
        <div className="ml-[11px] w-[64px] text-right whitespace-nowrap">
          00:35
          <br />
          18-05-2024
        </div>
      </div>
    </div>
  );
}

export default function App() {
  return (
    <div className="flex h-[768px] w-[1366px] flex-col overflow-hidden bg-white font-['Open_Sans','Noto_Sans',sans-serif]">
      <TabStrip />
      <Toolbar />
      <BookmarksBar />
      <div className="h-px bg-[#dfe1e5]" />
      <Page />
      <Taskbar />
    </div>
  );
}
